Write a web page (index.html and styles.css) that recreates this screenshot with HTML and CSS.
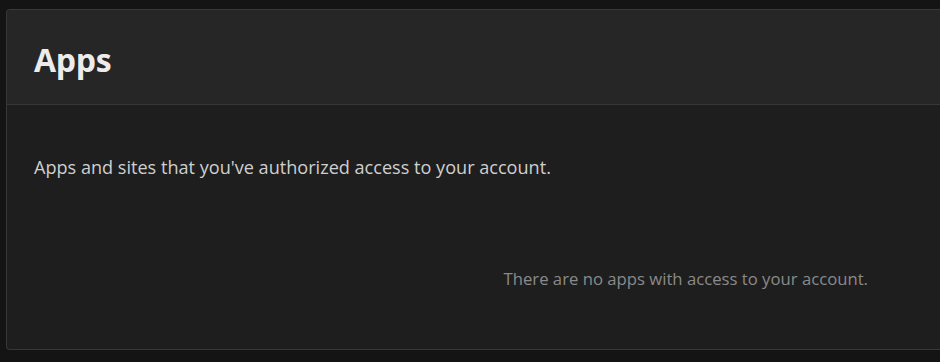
FILE: index.html
```html
<!DOCTYPE html>
<html>
<head>
<meta charset="utf-8">
<link rel="stylesheet" href="styles.css">
</head>
<body>
<section class="panel">
  <header class="panel-head">
    <h1 class="title">Apps</h1>
  </header>
  <div class="panel-body">
    <p class="desc">Apps and sites that you've authorized access to your account.</p>
    <p class="empty">There are no apps with access to your account.</p>
  </div>
</section>
</body>
</html>
```
FILE: styles.css
```css
html, body {
  margin: 0;
  padding: 0;
  background: #141414;
  overflow: hidden;
  height: 100%;
}
body {
  padding: 9px 0 0 6px;
  font-family: "Open Sans", "Noto Sans", sans-serif;
}
.panel {
  height: 341px;
  box-sizing: border-box;
  border: 1px solid #383838;
  border-right: none;
  border-radius: 4px 0 0 4px;
  background: #1e1e1e;
  overflow: hidden;
}
.panel-head {
  height: 95px;
  box-sizing: border-box;
  background: #262626;
  border-bottom: 1px solid #363636;
  display: flex;
  align-items: center;
  padding: 4px 0 0 27px;
}
.title {
  margin: 0;
  font-size: 32px;
  font-weight: 700;
  color: #ececec;
  letter-spacing: -0.3px;
}
.panel-body {
  padding: 0 72px 0 27px;
}
.desc {
  margin: 50px 0 0;
  font-size: 18.1px;
  color: #cfcfcf;
  line-height: 24px;
}
.empty {
  margin: 88px 0 0;
  text-align: right;
  font-size: 16.7px;
  color: #8a8a8a;
  line-height: 24px;
}
```
